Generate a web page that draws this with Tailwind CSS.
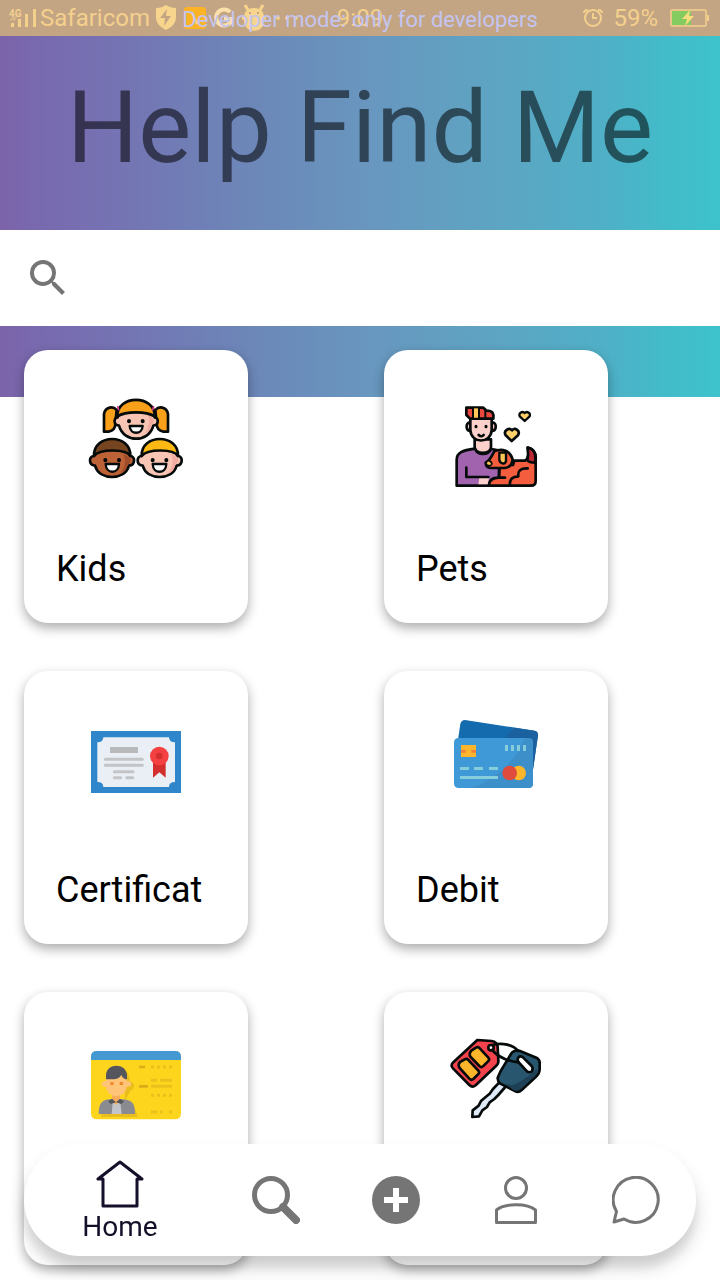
<!DOCTYPE html>
<html lang="en">
<head>
<meta charset="utf-8">
<meta name="viewport" content="width=device-width, initial-scale=1">
<title>Help Find Me</title>
<script src="https://cdn.jsdelivr.net/npm/@tailwindcss/browser@4"></script>
</head>
<body class="min-h-screen bg-white font-[Roboto,sans-serif] text-black">

<!-- Status bar -->
<div class="relative flex h-9 items-center bg-[#c3a584] pr-2.5 pl-2 text-2xl text-[#f4d08d]">
  <svg class="h-9 w-8 shrink-0" viewBox="0 0 32 36" fill="#f4d08d" aria-hidden="true">
    <text x="1" y="17" font-size="10" font-weight="700">4G</text>
    <path d="M3 23h3v4H3zM10 19h3v8h-3zM17 14h3v13h-3zM25 9h3v18h-3z"/>
    <path d="M2 20h2v-2h2v2h1v-3h2" fill="none" stroke="#f4d08d" stroke-width="1" opacity=".6"/>
  </svg>
  <span class="leading-[38px]">Safaricom</span>
  <svg class="ml-1 h-9 w-6 shrink-0" viewBox="0 0 24 36" aria-hidden="true">
    <path d="M12 5c3 2 6 3 10 3v9c0 6-4 10-10 13C6 27 2 23 2 17V8c4 0 7-1 10-3z" fill="#f8d58c"/>
    <path d="M13 9 6 18h5l-1 8 7-10h-5z" fill="#c3a584"/>
  </svg>
  <svg class="ml-1.5 h-9 w-6 shrink-0" viewBox="0 0 24 36" aria-hidden="true">
    <rect x="0" y="7" width="22" height="22" rx="3" fill="#fdb326"/>
    <path d="M8 12l5 12" stroke="#fff" stroke-opacity=".5" stroke-width="2"/>
  </svg>
  <svg class="ml-1 h-9 w-6 shrink-0" viewBox="0 0 24 36" aria-hidden="true">
    <path d="M18 12a8 8 0 1 0 2 7h-8" fill="none" stroke="#fbe0ab" stroke-width="4"/>
  </svg>
  <svg class="ml-1 h-9 w-7 shrink-0" viewBox="0 0 28 36" aria-hidden="true">
    <path d="M8 10 5 5M20 10l3-5M2 18h24" stroke="#f8d58c" stroke-width="3"/>
    <path d="M4 17C4 5 24 5 24 17v4C24 34 4 34 4 21z" fill="#f8d58c"/>
    <path d="M9 13h2M17 13h2" stroke="#c3a584" stroke-width="2"/>
  </svg>
  <svg class="ml-1 h-9 w-8 shrink-0" viewBox="0 0 32 36" fill="#f4d08d" aria-hidden="true">
    <circle cx="6" cy="18" r="2"/><circle cx="15" cy="18" r="2"/><circle cx="24" cy="18" r="2"/>
  </svg>
  <span class="absolute left-1/2 -translate-x-1/2 leading-[38px]">9:09</span>
  <span class="absolute inset-x-0 top-px text-center text-[22px] leading-[38px] text-[#c4c4f0]">Developer mode: only for developers</span>
  <svg class="ml-auto h-9 w-6 shrink-0" viewBox="0 0 24 36" fill="none" stroke="#f4d08d" stroke-width="2" aria-hidden="true">
    <circle cx="12" cy="18" r="8"/><path d="M12 13v5h4M3 13c0-2 2-3 4-3M21 13c0-2-2-3-4-3"/>
  </svg>
  <span class="ml-2 leading-[38px]">59%</span>
  <svg class="ml-3 h-9 w-10 shrink-0" viewBox="0 0 40 36" aria-hidden="true">
    <rect x="1" y="10" width="35" height="16" rx="1" fill="none" stroke="#f4d08d" stroke-width="1.5"/>
    <path d="M2 11h19v14H2z" fill="#84cc5f"/><path d="M37 15h2v6h-2z" fill="#f4d08d"/>
    <path d="M20 10l-8 9h5l-2 7 9-10h-5z" fill="#f8dc80"/>
  </svg>
</div>

<!-- Header -->
<header class="bg-[linear-gradient(90deg,#7c63aa_0%,#7968ad_4%,#7573b3_16%,#6c87b8_35%,#6897bf_52%,#5ea4c2_68%,#4fb0c7_84%,#43bbc9_92%,#3dc3cb_100%)] pb-[71px]">
  <h1 class="h-[194px] pt-8 text-center text-[100px] leading-[120px] whitespace-nowrap text-black/54">Help Find Me</h1>
  <label class="flex h-24 items-center gap-4 bg-white px-6">
    <svg class="size-12 shrink-0" viewBox="0 0 24 24" fill="#757575" aria-hidden="true">
      <path d="M15.5 14h-.79l-.28-.27A6.47 6.47 0 0 0 16 9.5 6.5 6.5 0 1 0 9.5 16c1.61 0 3.09-.59 4.23-1.57l.27.28v.79l5 4.99L20.49 19l-4.99-5zm-6 0C7.01 14 5 11.99 5 9.5S7.01 5 9.5 5 14 7.01 14 9.5 11.99 14 9.5 14z"/>
    </svg>
    <input type="search" aria-label="Search" class="h-full min-w-0 flex-1 bg-white text-4xl outline-none">
  </label>
</header>

<!-- Category cards -->
<main class="-mt-[47px] grid grid-cols-2 gap-y-12">
  <button type="button" class="ml-6 flex h-[273px] w-56 flex-col justify-between rounded-3xl bg-white px-8 pt-10 pb-8 text-left shadow-[0_5px_12px_rgba(0,0,0,0.33)]">
    <svg class="h-[100px] w-28 self-center" viewBox="0 0 336 300" stroke="#050a0a" stroke-width="8" stroke-linejoin="round" stroke-linecap="round" aria-hidden="true">
      <path d="M110 60c-10-12-34-11-38 12v53h14c14-3 20-10 20-24z" fill="#f9a01b"/>
      <path d="M226 60c10-12 34-11 38 12v53h-14c-14-3-20-10-20-24z" fill="#f9a01b"/>
      <path d="M113 82c-12 0-14 23 4 25 7 27 31 39 52 39s44-12 51-39c18-2 16-25 4-25-2-20-20-26-55-26s-54 6-56 26z" fill="#f8c5b4"/>
      <path d="M200 66c12 20 8 40-4 64 10-5 15-12 19-25 8-3 9-14 3-17-3-14-9-20-18-22z" fill="#f3aca0" stroke="none"/>
      <path d="M112 79c-2-66 114-66 112 0-25-16-87-16-112 0z" fill="#f9a01b"/>
      <path d="M113 50l3 9M221 50l-3 9" stroke="#d63f92" stroke-width="5"/>
      <path d="M147 93v1M188 93v1" stroke-width="12"/>
      <path d="M149 108h39c-1 27-38 27-39 0z" fill="#fff" stroke-width="7"/>
      <path d="M42 198c-15 0-18 27 3 29 7 25 30 34 51 34s44-9 51-34c20-2 19-29 4-29-5-27-103-27-109 0z" fill="#bd6236"/>
      <path d="M128 190c12 20 8 40-6 60 12-5 18-12 21-26 10-3 11-18 4-22z" fill="#9f4d2b" stroke="none"/>
      <path d="M42 198c-3-68 112-68 109 0-13-22-91-22-109 0z" fill="#774420"/>
      <path d="M76 210v1M117 210v1" stroke-width="12"/>
      <path d="M77 222h40c-1 31-39 31-40 0z" fill="#fff" stroke-width="7"/>
      <path d="M185 198c-15 0-18 27 3 29 7 25 30 34 51 34s44-9 51-34c20-2 19-29 4-29-5-27-103-27-109 0z" fill="#f8c5b4"/>
      <path d="M271 190c12 20 8 40-6 60 12-5 18-12 21-26 10-3 11-18 4-22z" fill="#f3aca0" stroke="none"/>
      <path d="M185 198c-3-68 112-68 109 0-13-22-91-22-109 0z" fill="#fdb813"/>
      <path d="M218 210v1M259 210v1" stroke-width="12"/>
      <path d="M218 222h41c-1 31-40 31-41 0z" fill="#fff" stroke-width="7"/>
    </svg>
    <span class="text-4xl leading-[44px]">Kids</span>
  </button>

  <button type="button" class="ml-6 flex h-[273px] w-56 flex-col justify-between rounded-3xl bg-white px-8 pt-10 pb-8 text-left shadow-[0_5px_12px_rgba(0,0,0,0.33)]">
    <svg class="h-[100px] w-28 self-center" viewBox="-15 -15 336 300" stroke="#050a0a" stroke-width="8" stroke-linejoin="round" stroke-linecap="round" aria-hidden="true">
      <path d="M75 82c-14 0-14 26 2 26M142 82c14 0 14 26-2 26" fill="#f8c5c0"/>
      <path d="M89 133v23c-1 23 50 23 49 0v-23z" fill="#fcd0cb"/>
      <path d="M76 70v35c2 42 62 42 64 0V70z" fill="#fcd0cb"/>
      <path d="M64 38h51l10 9c18 0 22 8 20 24H75L64 60z" fill="#e8483d"/>
      <path d="M84 40h18v28H84z" fill="#fdc857" stroke="none"/>
      <path d="M84 38v31M102 38v31M121 44v25" stroke-width="6"/>
      <path d="M93 94v1M123 94v1" stroke-width="9"/><path d="M101 120c5 5 11 5 15 0" fill="none"/>
      <path d="M90 161c-38 5-55 12-55 34v77h118l30-90c-8-15-20-16-45-20-8 20-40 20-48-1z" fill="#a163ad"/>
      <path d="M103 249l-3 19h31v-19z" fill="#fcd0cb" stroke="none"/>
      <path d="M64 218v28h66" fill="none"/>
      <path d="M164 210h40l4-13h32c15-10 10-25 8-39 20 5 26 16 24 36v64c0 10-6 14-14 14H132c0-16 8-24 30-24z" fill="#f45d3d"/>
      <path d="M248 158c24 5 24 23 23 45-14 0-22-4-24-7 4-15 3-24 1-38z" fill="#bd2936"/>
      <path d="M148 169c24-10 47-2 55 24-1 12-7 24-23 26h-38c-12 0-20-5-20-16 14-7 18-20 26-34z" fill="#f45d3d"/>
      <path d="M163 173h20v25c-3 12-19 8-20-4z" fill="#fdc857" stroke-width="7"/>
      <path d="M123 204c5-12 16-6 18 3-4 8-18 6-18-3z" fill="#fdc857" stroke-width="5"/>
      <path d="M162 220v28h18M195 271c-2-19 8-27 25-27-3-18 9-25 28-24" fill="none"/>
      <path d="M201 106c-9-10-27 1-19 15l18 17 19-17c8-14-9-25-18-15z" fill="#fdd06a"/>
      <path d="M239 54c-7-8-21 2-14 11l14 13 14-13c7-9-7-19-14-11z" fill="#fdd06a" stroke-width="7"/>
    </svg>
    <span class="text-4xl leading-[44px]">Pets</span>
  </button>

  <button type="button" class="ml-6 flex h-[273px] w-56 flex-col justify-between rounded-3xl bg-white px-8 pt-10 pb-8 text-left shadow-[0_5px_12px_rgba(0,0,0,0.33)]">
    <svg class="h-[100px] w-28 self-center" viewBox="0 -27 336 300" aria-hidden="true">
      <path d="M33 33h270v186H33z" fill="#2f86ca"/>
      <path d="M70 52h197q0 15 18 15v119q-18 0-18 15H70q0-15-18-15V67q18 0 18-15z" fill="#e9eff4"/>
      <path d="M90 81h84v18H90z" fill="#b8b9bb"/>
      <path d="M76 118h111M76 136h111M103 155h56M103 173h19M140 173h18" stroke="#c2c4c7" stroke-width="9" stroke-linecap="round"/>
      <path d="M219 125h38v48l-19-16-19 16z" fill="#d32f2f"/>
      <circle cx="238" cy="108" r="28" fill="#f44040"/><circle cx="238" cy="108" r="10" fill="#d32f2f"/>
    </svg>
    <span class="text-4xl leading-[44px]">Certificat</span>
  </button>

  <button type="button" class="ml-6 flex h-[273px] w-56 flex-col justify-between rounded-3xl bg-white px-8 pt-10 pb-8 text-left shadow-[0_5px_12px_rgba(0,0,0,0.33)]">
    <svg class="h-[100px] w-28 self-center" viewBox="-15 3 336 300" aria-hidden="true">
      <path d="M60 30l209 32q11 3 10 14l-16 110L38 96l8-54q3-12 14-12z" fill="#146cae"/>
      <path d="M207 53l62 9q11 3 10 14l-16 110-90-95z" fill="#1b609f"/>
      <rect x="27" y="84" width="237" height="150" rx="13" fill="#3f99d6"/>
      <path d="M240 84h11q13 0 13 13v124q0 13-13 13H77c75-26 135-80 163-150z" fill="#3d8fca"/>
      <path d="M48 105h45v36H48z" fill="#fdb52b"/><path d="M48 124h14M79 124h14" stroke="#f0803c" stroke-width="8"/>
      <path d="M180 105h9v18h-9zM198 105h9v18h-9zM216 105h9v18h-9zM234 105h9v18h-9zM45 171h27v9H45zM87 171h27v9H87zM132 171h27v9h-27zM45 198h114v9H45z" fill="#86cddb"/>
      <circle cx="221" cy="189" r="22" fill="#fdb52b"/><circle cx="194" cy="189" r="22" fill="#df4b3d"/>
    </svg>
    <span class="text-4xl leading-[44px]">Debit</span>
  </button>

  <button type="button" aria-label="ID card" class="ml-6 flex h-[273px] w-56 flex-col rounded-3xl bg-white px-8 pt-10 pb-8 shadow-[0_5px_12px_rgba(0,0,0,0.33)]">
    <svg class="h-[100px] w-28 self-center" viewBox="0 -24 336 300" aria-hidden="true">
      <rect x="33" y="33" width="270" height="205" rx="17" fill="#fed51d"/>
      <path d="M33 60V50q0-17 17-17h236q17 0 17 17v10z" fill="#4499d3"/>
      <path d="M135 90c12 10 14 22 14 34 16 4 18 20 6 26-8 5-14 25-24 34 28 4 36 20 42 47H64v-10h70z" fill="#e9bd1c"/>
      <path d="M56 222c0-30 8-43 34-44h40c27 2 35 14 35 44z" fill="#8a8b90"/>
      <path d="M98 187l-3 35h30l-4-35z" fill="#c4c5ca"/>
      <path d="M96 160h24v24l-12 10-12-10z" fill="#f9ad5b"/>
      <path d="M84 184l12-8 12 11-16 5zM132 184l-12-8-12 11 16 5z" fill="#55555e"/>
      <path d="M78 116v7c-18-2-18 18 0 18 3 19 16 27 31 27s28-8 31-27c18 0 18-20 0-18v-14l-62-7z" fill="#ffc477"/>
      <path d="M78 118v-13c2-37 60-37 63 0v13c-10 0-13-6-17-13-5 9-13 13-24 13z" fill="#55555e"/>
      <path d="M91 126h10v9H91zM119 126h10v9h-10z" fill="#f08a2c"/>
      <path d="M177 81h18M177 139h27" stroke="#d9ac18" stroke-width="8"/>
      <path d="M213 81h63M213 166h63" stroke="#eac11b" stroke-width="9" stroke-dasharray="9"/>
      <path d="M213 121h18M240 121h36M213 139h63M213 216h18M240 216h9M267 216h9" stroke="#eac11b" stroke-width="9"/>
    </svg>
  </button>

  <button type="button" aria-label="Keys" class="ml-6 flex h-[273px] w-56 flex-col rounded-3xl bg-white px-8 pt-10 pb-8 shadow-[0_5px_12px_rgba(0,0,0,0.33)]">
    <svg class="h-[100px] w-28 self-center" viewBox="0 6 336 300" stroke="#050a0a" stroke-width="8" stroke-linejoin="round" stroke-linecap="round" aria-hidden="true">
      <path d="M112 30l43 3q16 3 18 17l2 43q1 8-7 15l-61 58q-10 8-19-1l-49-50q-9-9 1-18z" fill="#f4434c"/>
      <path d="M60 96l14-8q7-4 12 3l29 31q5 6-1 11l-14 14q-6 5-12-1l-30-33q-5-10 2-17z" fill="#fdb52b"/>
      <path d="M94 62l14-9q7-4 12 3l25 27q5 6-1 11l-15 15q-6 5-11-1l-27-28q-5-10 3-18z" fill="#fdb52b"/>
      <path d="M183 152l-24 25-10 14-12 10-14 12-7 14-18 14-1 20 20-2 10-18 14-10 8-14 14-10 12-12 34-39z" fill="#dfeaf8"/>
      <path d="M222 64q8-5 18-1l49 20q10 6 10 15v20q0 12-11 22l-43 40q-10 9-20 3l-44-22q-9-8-8-18l8-18 33-55q3-5 8-6z" fill="#28566f"/>
      <path d="M292 116c-28 24-55 44-75 49l-20-2 23 17c8 4 14 3 22-4l43-38q8-10 7-22z" fill="#1d4056" stroke="none"/>
      <path d="M235 82q6-6 14 0l26 26q5 6 1 16-8 5-15 0l-26-28q-4-6 0-14z" fill="#fff"/>
      <circle cx="153" cy="53" r="8" fill="#fff"/>
      <path d="M157 45c30-8 62-1 78 18M156 60c22 24 48 34 80 37" fill="none"/>
    </svg>
  </button>
</main>

<!-- Floating bottom navigation -->
<nav aria-label="Main" class="fixed inset-x-6 bottom-6 flex h-28 items-center rounded-full bg-white shadow-[0_12px_18px_rgba(0,0,0,0.16),0_12px_10px_rgba(0,0,0,0.06)]">
  <a href="#home" aria-current="page" class="flex flex-[8] flex-col items-center self-start pt-4 text-[28px] leading-[38px] text-[#160f29]">
    <svg class="size-12" viewBox="0 0 48 48" fill="none" stroke="#160f29" stroke-width="3" stroke-linejoin="round" aria-hidden="true">
      <path d="M24 2 2 19h5v27h34V19h5z"/>
    </svg>
    <span>Home</span>
  </a>
  <a href="#search" aria-label="Search" class="flex flex-[5] justify-center">
    <svg class="size-12" viewBox="0 0 48 48" fill="none" stroke="#757575" aria-hidden="true">
      <circle cx="19" cy="19" r="16.5" stroke-width="5"/><path d="M31 31l13 13" stroke-width="8" stroke-linecap="round"/>
    </svg>
  </a>
  <a href="#add" aria-label="Add" class="flex flex-[5] justify-center">
    <svg class="size-12" viewBox="0 0 48 48" aria-hidden="true">
      <circle cx="24" cy="24" r="24" fill="#757575"/><path d="M24 12v24M12 24h24" stroke="#fff" stroke-width="6"/>
    </svg>
  </a>
  <a href="#profile" aria-label="Profile" class="flex flex-[5] justify-center">
    <svg class="size-12" viewBox="0 0 48 48" fill="none" stroke="#757575" stroke-width="3" aria-hidden="true">
      <circle cx="24" cy="12" r="10.5"/><path d="M4.500 46.500V34c8-7 31-7 39 0v12.500z" stroke-linejoin="round"/>
    </svg>
  </a>
  <a href="#messages" aria-label="Messages" class="flex flex-[5] justify-center">
    <svg class="size-12" viewBox="0 0 48 48" fill="none" stroke="#757575" stroke-width="3" stroke-linejoin="round" aria-hidden="true">
      <path d="M4.500 35.500A22.500 22.500 0 1 1 12 43L2 46z"/>
    </svg>
  </a>
</nav>
</body>
</html>
